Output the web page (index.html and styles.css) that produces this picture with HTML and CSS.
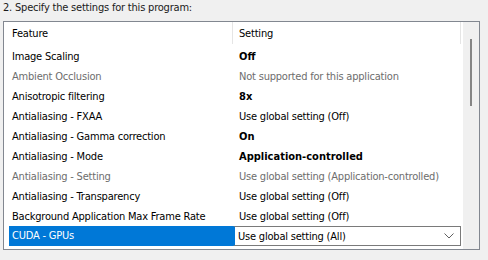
FILE: index.html
```html
<html lang="en">
<head>
  <meta charset="UTF-8">
  <title>Program settings</title>
  <link rel="stylesheet" href="styles.css">
</head>
<body>
  <div class="title">2. Specify the settings for this program:</div>
  <div class="panel">
    <div class="list">
      <div class="row head">
        <div class="cell">Feature</div>
        <div class="cell">Setting</div>
      </div>
      <div class="row">
        <div class="cell">Image Scaling</div>
        <div class="cell bold">Off</div>
      </div>
      <div class="row off">
        <div class="cell">Ambient Occlusion</div>
        <div class="cell">Not supported for this application</div>
      </div>
      <div class="row">
        <div class="cell">Anisotropic filtering</div>
        <div class="cell bold">8x</div>
      </div>
      <div class="row">
        <div class="cell">Antialiasing - FXAA</div>
        <div class="cell">Use global setting (Off)</div>
      </div>
      <div class="row">
        <div class="cell">Antialiasing - Gamma correction</div>
        <div class="cell bold">On</div>
      </div>
      <div class="row">
        <div class="cell">Antialiasing - Mode</div>
        <div class="cell bold">Application-controlled</div>
      </div>
      <div class="row off">
        <div class="cell">Antialiasing - Setting</div>
        <div class="cell">Use global setting (Application-controlled)</div>
      </div>
      <div class="row">
        <div class="cell">Antialiasing - Transparency</div>
        <div class="cell">Use global setting (Off)</div>
      </div>
      <div class="row">
        <div class="cell">Background Application Max Frame Rate</div>
        <div class="cell">Use global setting (Off)</div>
      </div>
      <div class="row selected">
        <div class="cell">CUDA - GPUs</div>
        <div class="select">
          <span>Use global setting (All)</span>
          <svg width="10" height="6" viewBox="0 0 10 6"><path d="M0.5 0.5l4.5 4.5 4.5-4.5" fill="none" stroke="#606060" stroke-width="1"/></svg>
        </div>
      </div>
    </div>
    <div class="scroll">
      <div class="thumb"></div>
    </div>
  </div>
</body>
</html>
```

FILE: styles.css
```css
* {
  padding: 0;
  margin: 0;
  box-sizing: border-box;
}
body {
  background: #f0f0f0;
  font-family: "DejaVu Sans Condensed", "DejaVu Sans", sans-serif;
  font-size: 11px;
  letter-spacing: -0.2px;
  color: #000;
}
.title {
  height: 21px;
  padding: 1px 0 0 3px;
  line-height: 14px;
  color: #1a1a1a;
}
.panel {
  display: flex;
  width: 477px;
  height: 229px;
  margin-left: 3px;
  border: 1px solid #828790;
  background: #fff;
}
.list {
  flex: 1;
  padding-left: 5px;
}
.row {
  display: grid;
  grid-template-columns: 224px 228px;
  height: 20px;
  align-items: center;
}
.row .cell {
  white-space: nowrap;
  overflow: hidden;
}
.row .cell:first-child {
  padding-left: 3px;
}
.row .cell:nth-child(2) {
  padding-left: 6px;
}
.head {
  height: 24px;
  align-items: start;
}
.head .cell {
  height: 22px;
  padding-top: 5px;
  border-right: 1px solid #e5e5e5;
}
.bold {
  font-weight: bold;
  letter-spacing: 0;
}
.off {
  color: #6d6d6d;
}
.selected .cell {
  height: 20px;
  line-height: 20px;
  background: #0078d7;
  color: #fff;
}
.select {
  display: flex;
  align-items: center;
  justify-content: space-between;
  height: 20px;
  padding: 0 6px 0 3px;
  border: 1px solid #7a7a7a;
  border-left: 2px solid #0078d7;
  background: #fff;
}
.scroll {
  width: 16px;
  background: #f0f0f0;
  padding: 17px 0 0 7px;
}
.thumb {
  width: 2px;
  height: 67px;
  background: #858585;
}
```
